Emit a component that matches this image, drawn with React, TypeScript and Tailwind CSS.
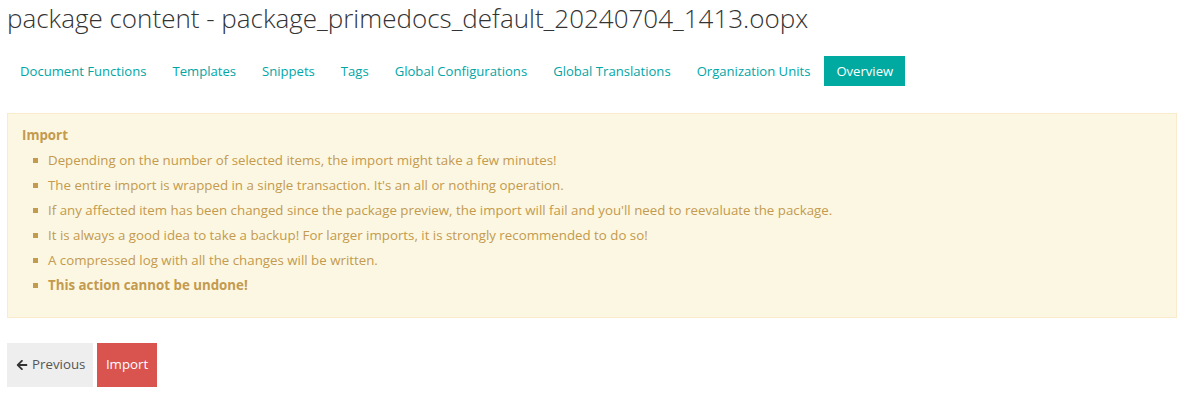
import { FaArrowLeft } from 'react-icons/fa';

const tabs = [
  'Document Functions',
  'Templates',
  'Snippets',
  'Tags',
  'Global Configurations',
  'Global Translations',
  'Organization Units',
  'Overview',
];

const notes = [
  'Depending on the number of selected items, the import might take a few minutes!',
  "The entire import is wrapped in a single transaction. It's an all or nothing operation.",
  "If any affected item has been changed since the package preview, the import will fail and you'll need to reevaluate the package.",
  'It is always a good idea to take a backup! For larger imports, it is strongly recommended to do so!',
  'A compressed log with all the changes will be written.',
];

export default function App() {
  return (
    <div className="min-h-screen bg-white px-[7px] text-[13.3px] text-[#333]" style={{ fontFamily: "'Open Sans', sans-serif" }}>
      {/* Title */}
      <h1 className="text-[26px] font-light leading-[36px] text-[#333]">
        package content - package_primedocs_default_20240704_1413.oopx
      </h1>

      {/* Tabs */}
      <nav className="mt-[20px] flex items-center gap-[2px] pl-[1px] text-[13.1px]">
        {tabs.map((t) => (
          <span
            key={t}
            className={
              t === 'Overview'
                ? 'h-[30px] px-[12px] leading-[30px] bg-[#00aaa1] text-white'
                : 'h-[30px] px-[12px] leading-[30px] text-[#00a6a6]'
            }
          >
            {t}
          </span>
        ))}
      </nav>

      {/* Warning */}
      <div className="mt-[27px] border border-[#faebcc] bg-[#fcf7e2] px-[14px] pt-[11px] pb-[19px] text-[#c39a4e]">
        <div className="font-bold leading-[20px]">Import</div>
        <ul className="mt-[3px]">
          {notes.map((n) => (
            <li key={n} className="flex items-center leading-[25px]">
              <span className="ml-[11px] mr-[10px] h-[5px] w-[5px] bg-[#c39a4e]" />
              {n}
            </li>
          ))}
          <li className="flex items-center font-bold leading-[25px]">
            <span className="ml-[11px] mr-[10px] h-[5px] w-[5px] bg-[#c39a4e]" />
            This action cannot be undone!
          </li>
        </ul>
      </div>

      {/* Actions */}
      <div className="mt-[25px] flex gap-[4px]">
        <button className="flex h-[44px] items-center gap-[4px] bg-[#eeeeee] pl-[9px] pr-[8px] text-[#555]">
          <FaArrowLeft className="h-[12px] w-[12px] text-[#333]" />
          Previous
        </button>
        <button className="h-[44px] bg-[#d9534f] px-[8.5px] text-white">Import</button>
      </div>
    </div>
  );
}
